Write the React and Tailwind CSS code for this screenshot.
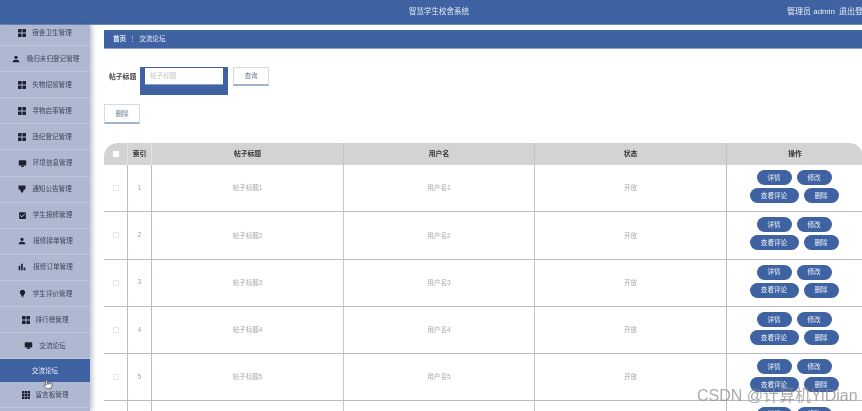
import React from "react";
import { MdPerson, MdDesktopWindows, MdCheckBox, MdBarChart, MdLightbulb } from "react-icons/md";
import { Pointer } from "lucide-react";

const Grid4 = () => (
  <svg viewBox="0 0 8 8" className="w-[8px] h-[8px] shrink-0" fill="#1c2030">
    <rect x="0" y="0" width="3.6" height="3.6" rx="0.5" />
    <rect x="4.4" y="0" width="3.6" height="3.6" rx="0.5" />
    <rect x="0" y="4.4" width="3.6" height="3.6" rx="0.5" />
    <rect x="4.4" y="4.4" width="3.6" height="3.6" rx="0.5" />
  </svg>
);
const Grid9 = () => (
  <svg viewBox="0 0 9 9" className="w-[8px] h-[8px] shrink-0" fill="#1c2030">
    {[0, 3.2, 6.4].flatMap((y) => [0, 3.2, 6.4].map((x) => <rect key={`${x}-${y}`} x={x} y={y} width="2.7" height="2.7" />))}
  </svg>
);
const Monitor = () => <MdDesktopWindows className="w-[9px] h-[9px] shrink-0 text-[#1c2030]" />;
const Notice = () => (
  <svg viewBox="0 0 8 8" className="w-[8px] h-[8px] shrink-0" fill="#1c2030">
    <path d="M0.5 0.5h7v4h-1.6L4.8 7.6h-1.6L2.1 4.5H0.5z" />
  </svg>
);
const Person = () => <MdPerson className="w-[10px] h-[10px] shrink-0 text-[#1c2030]" />;
const Check = () => <MdCheckBox className="w-[9px] h-[9px] shrink-0 text-[#1c2030]" />;
const Chart = () => <MdBarChart className="w-[10px] h-[10px] shrink-0 text-[#1c2030]" />;
const Bulb = () => <MdLightbulb className="w-[9px] h-[9px] shrink-0 text-[#1c2030]" />;

const menu = [
  [Grid4, "宿舍卫生管理"],
  [Person, "晚归未归登记管理"],
  [Grid4, "失物招领管理"],
  [Grid4, "寻物启事管理"],
  [Grid4, "违纪登记管理"],
  [Monitor, "环境信息管理"],
  [Notice, "通知公告管理"],
  [Check, "学生报修管理"],
  [Person, "报修接单管理"],
  [Chart, "报修订单管理"],
  [Bulb, "学生评价管理"],
  [Grid4, "排行榜管理"],
  [Monitor, "交流论坛"],
];

const cols = "grid grid-cols-[24px_24px_192px_191px_192px_136px]";

const Pill = ({ children, w }) => (
  <button className={`${w} h-[15px] rounded-full bg-[#3f62a3] text-[#eef1f7] text-[6.6px] flex items-center justify-center`}>
    {children}
  </button>
);

export default function App() {
  return (
    <div className="relative w-[862px] h-[411px] overflow-hidden bg-white flex flex-col font-['Liberation_Sans','Noto_Sans_CJK_SC',sans-serif] blur-[0.45px]">
      <header className="h-[25px] shrink-0 bg-[#3f62a3] border-b border-[#6f8bbd] flex items-center pl-[409px] text-[7.5px] text-[#e6ebf4] whitespace-nowrap overflow-hidden">
        <span className="w-[378px] shrink-0">智慧学生校舍系统</span>
        <span className="shrink-0 text-[8px]">管理员 admin</span>
        <span className="ml-[4px] shrink-0 text-[8px]">退出登录</span>
      </header>

      <div className="flex flex-1 min-h-0">
        <aside className="relative w-[90px] shrink-0 overflow-hidden bg-[#aeb8d0] shadow-[2px_0_5px_rgba(60,70,100,0.35)] z-10">
          <div className="-mt-[5px]">
            {menu.map(([Icon, label]) => (
              <div key={label} className="h-[26.1px] border-b border-[#bcc5da] flex items-center justify-center gap-[6px] text-[6.6px] text-[#40465a]">
                <Icon />
                <span>{label}</span>
              </div>
            ))}
            <div className="h-[23px] bg-[#3f62a3] flex items-center justify-center text-[6.6px] text-[#e6ebf4]">交流论坛</div>
            <div className="h-[26.1px] border-b border-[#bcc5da] flex items-center justify-center gap-[6px] text-[6.6px] text-[#40465a]">
              <Grid9 />
              <span>留言板管理</span>
            </div>
          </div>
          <Pointer className="absolute left-[43px] top-[354px] w-[10px] h-[11px] text-[#333] fill-white" strokeWidth={1.5} />
        </aside>

        <main className="flex-1 min-w-0 overflow-hidden pl-[14px] pt-[5px]">
          <nav className="w-[758px] h-[19px] bg-[#3f62a3] border-b border-[#8fa3c9] pl-[9px] flex items-center text-[6.6px] text-[#e6ebf4]">
            <span className="font-bold">首页</span>
            <span className="mx-[3px]">⋮</span>
            <span>交流论坛</span>
          </nav>

          <div className="flex items-start mt-[18px] h-[29px]">
            <label className="w-[36px] pl-[5px] pt-[5px] text-[6.8px] font-bold text-[#444]">帖子标题</label>
            <div className="w-[88px] h-[28px] bg-[#3f62a3] px-[5px] pt-[1px]">
              <div className="h-[17px] bg-white pl-[5px] flex items-center text-[6.6px] text-[#c4c4c4] border-b border-[#8fa3c9]">帖子标题</div>
            </div>
            <button className="ml-[5px] w-[36px] h-[19px] border border-[#d5d9e3] border-b-2 border-b-[#9fb4cf] text-[6.6px] text-[#6c7a92]">查询</button>
          </div>

          <button className="block mt-[8px] w-[36px] h-[20px] border border-[#d5d9e3] border-b-2 border-b-[#9fb4cf] text-[6.6px] text-[#6c7a92]">删除</button>

          <div className="mt-[19px] w-[759px]">
            <div className={`${cols} h-[22px] bg-[#d3d3d3] rounded-t-[14px] text-[6.8px] font-bold text-[#333]`}>
              <div className="flex items-center justify-center border-r border-[#e2e2e2]">
                <span className="w-[6px] h-[6px] bg-white" />
              </div>
              <div className="flex items-center justify-center border-r border-[#e2e2e2]">索引</div>
              <div className="flex items-center justify-center border-r border-[#c4c4c4]">帖子标题</div>
              <div className="flex items-center justify-center border-r border-[#c4c4c4]">用户名</div>
              <div className="flex items-center justify-center border-r border-[#c4c4c4]">状态</div>
              <div className="flex items-center justify-center">操作</div>
            </div>
            {[1, 2, 3, 4, 5, 6].map((n) => (
              <div key={n} className={`${cols} h-[47.3px] border-b border-[#b9bbc9] text-[6.6px] text-[#a8a8a8]`}>
                <div className="flex items-center justify-center border-r border-[#b9bbc9]">
                  <span className="w-[6px] h-[6px] border border-[#e8e8e8]" />
                </div>
                <div className="flex items-center justify-center border-r border-[#b9bbc9] text-[7px]">{n}</div>
                <div className="flex items-center justify-center border-r border-[#c5c7d3]">帖子标题{n}</div>
                <div className="flex items-center justify-center border-r border-[#c5c7d3]">用户名{n}</div>
                <div className="flex items-center justify-center border-r border-[#b9bbc9]">开放</div>
                <div className="flex items-center justify-center pb-[3px] pr-[2px]">
                  <div className="w-[90px] flex flex-wrap justify-center gap-x-[5px] gap-y-[3px]">
                    <Pill w="w-[35px]">详情</Pill>
                    <Pill w="w-[35px]">修改</Pill>
                    <Pill w="w-[49px]">查看评论</Pill>
                    <Pill w="w-[35px]">删除</Pill>
                  </div>
                </div>
              </div>
            ))}
          </div>
        </main>
      </div>

      <div className="absolute left-[697px] top-[387px] text-[16px] leading-[18px] text-[#8d8d8d]/75 whitespace-nowrap">CSDN @计算机YiDian</div>
    </div>
  );
}
